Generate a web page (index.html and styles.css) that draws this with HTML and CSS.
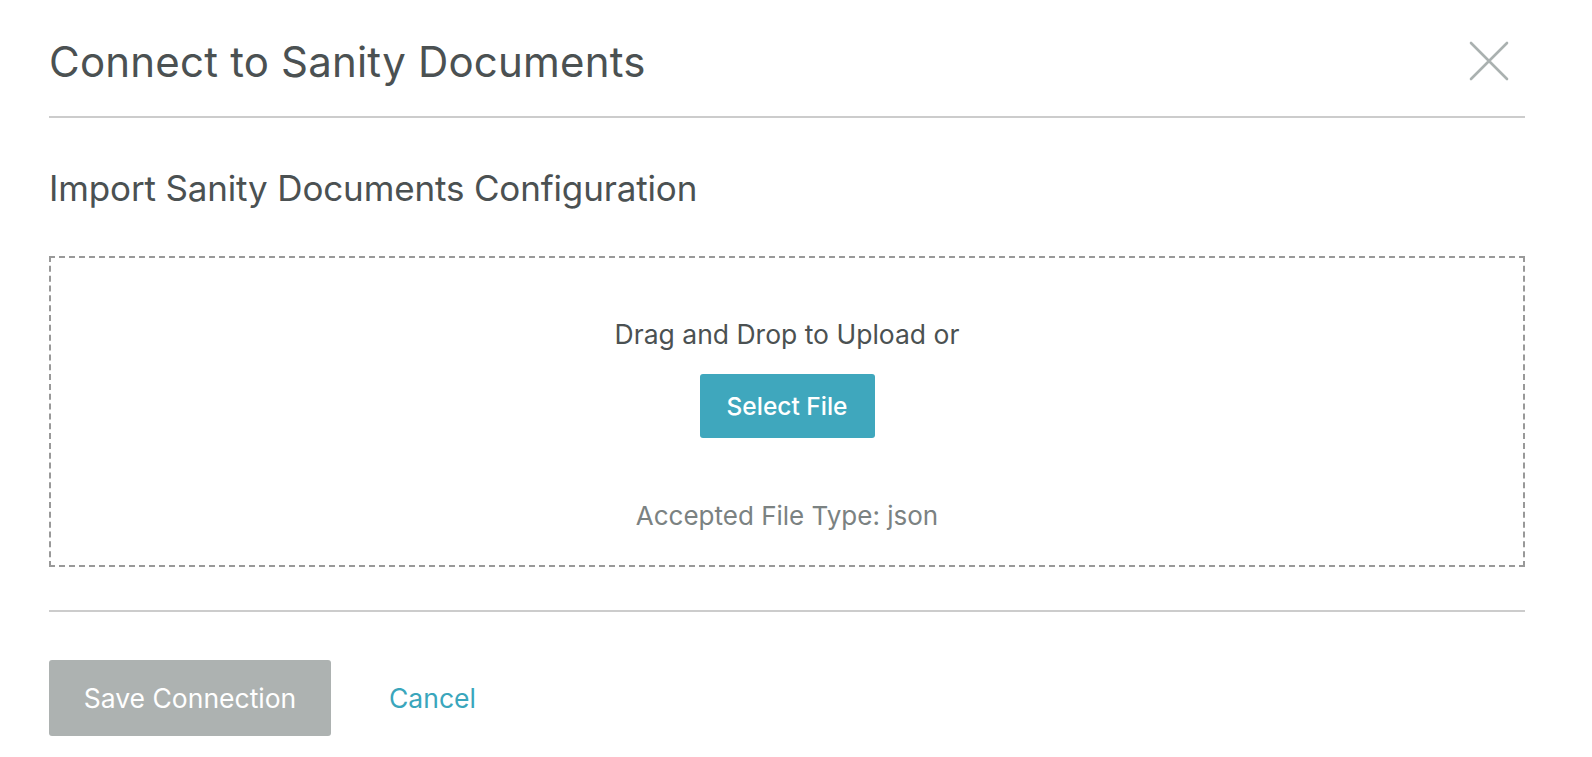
FILE: index.html
```html
<!DOCTYPE html>
<html>
<head>
<meta charset="utf-8">
<link rel="stylesheet" href="styles.css">
</head>
<body>
<div class="modal">
  <header class="modal-header">
    <h1 class="modal-title">Connect to Sanity Documents</h1>
    <button class="close-btn" aria-label="Close">
      <svg width="40" height="40" viewBox="0 0 40 40"><path d="M2 2 L38 38 M38 2 L2 38" stroke="#aab1b0" stroke-width="2.6" stroke-linecap="round" fill="none"/></svg>
    </button>
  </header>
  <section class="modal-body">
    <h2 class="section-title">Import Sanity Documents Configuration</h2>
    <div class="dropzone">
      <p class="drop-text">Drag and Drop to Upload or</p>
      <button class="select-btn">Select File</button>
      <p class="accepted">Accepted File Type: json</p>
    </div>
  </section>
  <footer class="modal-footer">
    <button class="save-btn">Save Connection</button>
    <button class="cancel-btn">Cancel</button>
  </footer>
</div>
</body>
</html>
```

FILE: styles.css
```css
* { box-sizing: border-box; }
html, body { margin: 0; padding: 0; background: #fff; }
body {
  font-family: Inter, "Liberation Sans", sans-serif;
  color: #4b5152;
}
.modal {
  width: 1476px;
  margin-left: 49px;
}
.modal-header {
  display: flex;
  justify-content: space-between;
  align-items: center;
  height: 118px;
  padding-top: 6px;
  border-bottom: 2px solid #cccccc;
}
.modal-title {
  margin: 0;
  font-size: 42px;
  font-weight: 400;
  letter-spacing: 0.2px;
  color: #4b5152;
}
.close-btn {
  background: none;
  border: 0;
  padding: 0;
  margin-right: 16px;
  width: 40px;
  height: 40px;
  cursor: pointer;
}
.close-btn svg { display: block; }
.modal-body {
  padding-top: 50px;
  padding-bottom: 43px;
  border-bottom: 2px solid #cccccc;
}
.section-title {
  margin: 0 0 48px;
  font-size: 35px;
  line-height: 40px;
  font-weight: 400;
  letter-spacing: -0.15px;
  color: #4b5152;
}
.dropzone {
  height: 311px;
  border: 2px dashed #999999;
  display: flex;
  flex-direction: column;
  align-items: center;
  padding-top: 56px;
}
.drop-text {
  margin: 0;
  font-size: 26.5px;
  line-height: 40px;
  color: #4b5152;
}
.select-btn {
  margin-top: 20px;
  width: 175px;
  height: 64px;
  border: 0;
  border-radius: 3px;
  background: #3fa7bd;
  color: #fff;
  font-family: Inter, "Liberation Sans", sans-serif;
  font-size: 24.5px;
  font-weight: 500;
}
.accepted {
  margin: 58px 0 0;
  font-size: 26px;
  line-height: 40px;
  color: #7b8282;
}
.modal-footer {
  display: flex;
  align-items: center;
  gap: 58px;
  padding-top: 48px;
}
.save-btn {
  width: 282px;
  height: 76px;
  border: 0;
  border-radius: 3px;
  background: #adb2b1;
  color: #fff;
  font-family: Inter, "Liberation Sans", sans-serif;
  font-size: 26.5px;
  font-weight: 400;
}
.cancel-btn {
  background: none;
  border: 0;
  padding: 0;
  color: #3aa6bc;
  font-family: Inter, "Liberation Sans", sans-serif;
  font-size: 26.5px;
}
```
